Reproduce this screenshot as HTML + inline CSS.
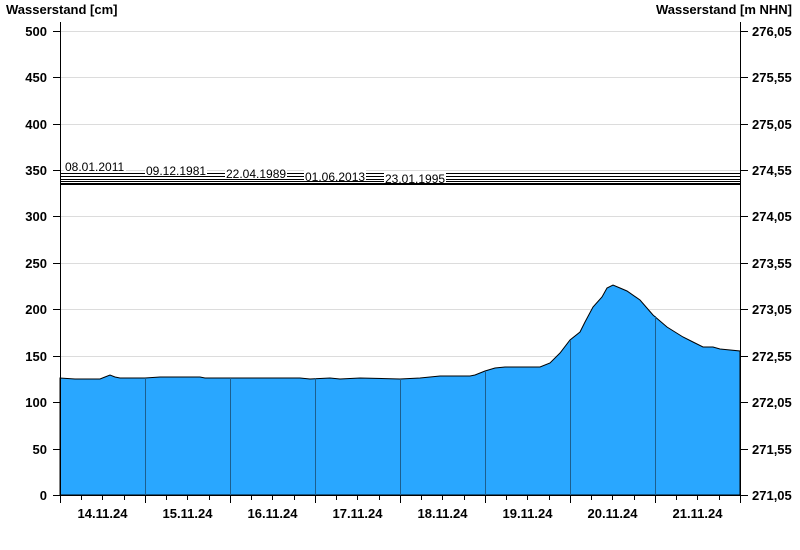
<!DOCTYPE html>
<html><head><meta charset="utf-8"><style>
body{margin:0;background:#fff;}
svg{display:block;font-family:"Liberation Sans",Arial,sans-serif;}
.b{font-weight:bold;font-size:13px;fill:#000;}
.l{font-size:12px;fill:#000;}
</style></head><body>
<svg width="800" height="550" viewBox="0 0 800 550">
<rect width="800" height="550" fill="#fff"/>
<text class="b" x="6" y="14">Wasserstand [cm]</text>
<text class="b" x="792" y="14" text-anchor="end">Wasserstand [m NHN]</text>
<g stroke="#dcdcdc" stroke-width="1">
<line x1="60" x2="740" y1="31.5" y2="31.5"/><line x1="60" x2="740" y1="77.5" y2="77.5"/>
<line x1="60" x2="740" y1="124.5" y2="124.5"/><line x1="60" x2="740" y1="170.5" y2="170.5"/>
<line x1="60" x2="740" y1="216.5" y2="216.5"/><line x1="60" x2="740" y1="263.5" y2="263.5"/>
<line x1="60" x2="740" y1="309.5" y2="309.5"/><line x1="60" x2="740" y1="356.5" y2="356.5"/>
<line x1="60" x2="740" y1="402.5" y2="402.5"/><line x1="60" x2="740" y1="449.5" y2="449.5"/>
</g>
<polygon fill="#29a7ff" stroke="#000" stroke-width="1" points="60,495 60,378 75,379 100,379 105,377 110,375 115,377 120,378 145,378 160,377 200,377 205,378 300,378 310,379 330,378 340,379 360,378 400,379 420,378 440,376 470,376 475,375 485,371 495,368 505,367 540,367 550,363 560,353 570,340 580,332 585,322 593,307 602,297 607,288 613,285 620,288 627,291 640,300 653,315 667,327 683,337 693,342 703,347 713,347 720,349 740,351 740,495"/>
<g stroke="#1c5f8f" stroke-width="1">
<line x1="145.5" x2="145.5" y1="378" y2="495"/><line x1="230.5" x2="230.5" y1="378" y2="495"/>
<line x1="315.5" x2="315.5" y1="378" y2="495"/><line x1="400.5" x2="400.5" y1="379" y2="495"/>
<line x1="485.5" x2="485.5" y1="371" y2="495"/><line x1="570.5" x2="570.5" y1="340" y2="495"/>
<line x1="655.5" x2="655.5" y1="316" y2="495"/>
</g>
<g stroke="#000" stroke-width="1">
<line x1="60" x2="740" y1="173.5" y2="173.5"/>
<line x1="60" x2="740" y1="176.5" y2="176.5"/>
<line x1="60" x2="740" y1="179.5" y2="179.5"/>
<line x1="60" x2="740" y1="181.5" y2="181.5"/>
<line x1="60" x2="740" y1="184" y2="184" stroke-width="2"/>
</g>
<g class="l">
<rect x="64" y="158" width="62" height="15" fill="#fff"/><text x="65" y="171">08.01.2011</text>
<rect x="145" y="164" width="62" height="12" fill="#fff"/><text x="146" y="175">09.12.1981</text>
<rect x="225" y="167" width="62" height="12" fill="#fff"/><text x="226" y="178">22.04.1989</text>
<rect x="304" y="170" width="62" height="11" fill="#fff"/><text x="305" y="181">01.06.2013</text>
<rect x="384" y="172" width="62" height="11" fill="#fff"/><text x="385" y="183">23.01.1995</text>
</g>
<g stroke="#000" stroke-width="1">
<line x1="60.5" x2="60.5" y1="22" y2="495"/>
<line x1="740.5" x2="740.5" y1="22" y2="495"/>
<line x1="60" x2="741" y1="495.5" y2="495.5"/>
<path d="M53,31.5h7M53,77.5h7M53,124.5h7M53,170.5h7M53,216.5h7M53,263.5h7M53,309.5h7M53,356.5h7M53,402.5h7M53,449.5h7M53,495.5h7"/>
<path d="M741,31.5h7M741,77.5h7M741,124.5h7M741,170.5h7M741,216.5h7M741,263.5h7M741,309.5h7M741,356.5h7M741,402.5h7M741,449.5h7M741,495.5h7"/>
<path d="M60.5,495v8M145.5,495v8M230.5,495v8M315.5,495v8M400.5,495v8M485.5,495v8M570.5,495v8M655.5,495v8M740.5,495v8"/>
<path d="M81.5,495v5M102.5,495v5M124.5,495v5M166.5,495v5M187.5,495v5M209.5,495v5M251.5,495v5M272.5,495v5M294.5,495v5M336.5,495v5M357.5,495v5M379.5,495v5M421.5,495v5M442.5,495v5M464.5,495v5M506.5,495v5M527.5,495v5M549.5,495v5M591.5,495v5M612.5,495v5M634.5,495v5M676.5,495v5M697.5,495v5M719.5,495v5"/>
</g>
<g class="b" text-anchor="end">
<text x="47" y="36">500</text><text x="47" y="82">450</text><text x="47" y="129">400</text>
<text x="47" y="175">350</text><text x="47" y="221">300</text><text x="47" y="268">250</text>
<text x="47" y="314">200</text><text x="47" y="361">150</text><text x="47" y="407">100</text>
<text x="47" y="454">50</text><text x="47" y="500">0</text>
</g>
<g class="b">
<text x="752" y="36">276,05</text><text x="752" y="82">275,55</text><text x="752" y="129">275,05</text>
<text x="752" y="175">274,55</text><text x="752" y="221">274,05</text><text x="752" y="268">273,55</text>
<text x="752" y="314">273,05</text><text x="752" y="361">272,55</text><text x="752" y="407">272,05</text>
<text x="752" y="454">271,55</text><text x="752" y="500">271,05</text>
</g>
<g class="b" text-anchor="middle">
<text x="102.5" y="518">14.11.24</text><text x="187.5" y="518">15.11.24</text>
<text x="272.5" y="518">16.11.24</text><text x="357.5" y="518">17.11.24</text>
<text x="442.5" y="518">18.11.24</text><text x="527.5" y="518">19.11.24</text>
<text x="612.5" y="518">20.11.24</text><text x="697.5" y="518">21.11.24</text>
</g>
</svg>
</body></html>
